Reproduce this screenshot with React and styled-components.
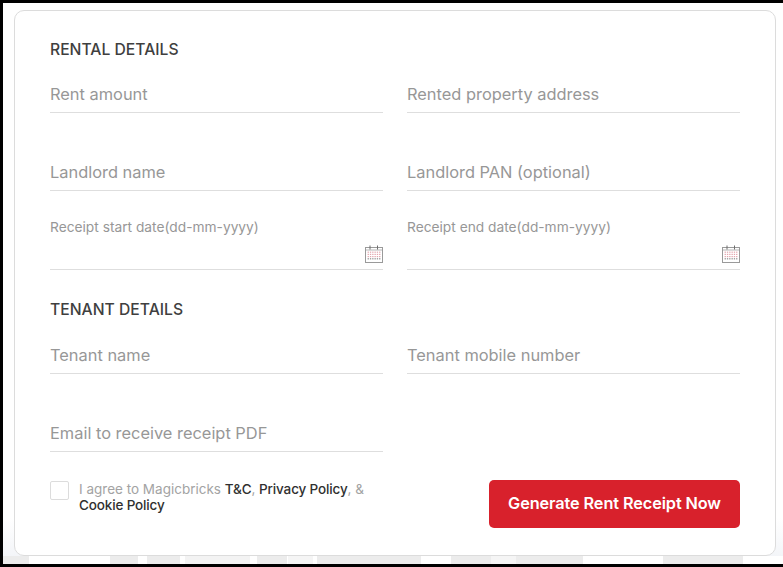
import React from "react";
import styled, { createGlobalStyle } from "styled-components";

const GlobalStyle = createGlobalStyle`
  html, body {
    margin: 0;
    padding: 0;
    background: #fff;
  }
  * { box-sizing: border-box; }
`;

const Frame = styled.div`
  width: 783px;
  height: 567px;
  padding: 3px 0 3px 3px;
  background: #000;
  overflow: hidden;
`;

const Backdrop = styled.div`
  display: flex;
  flex-direction: column;
  height: 100%;
  padding-top: 7px;
  background: linear-gradient(to bottom, #fff 0, #fff 515px, #f1f3f7 100%);
`;

const CardWrap = styled.div`
  flex: 1;
  min-height: 0;
  padding: 0 7px 0 11px;
`;

const Card = styled.form`
  height: 100%;
  padding: 29px 35px 0 35px;
  background: #fff;
  border: 1px solid #dcdcdc;
  border-radius: 10px;
  font-family: Inter, "Liberation Sans", sans-serif;
`;

// blurred bits of the page behind the dialog
const PageStrip = styled.div`
  flex: none;
  display: flex;
  height: 8px;
  background: #fff;
`;

const PageBlur = styled.span`
  flex: none;
  width: ${(p) => p.$width}px;
  margin-left: ${(p) => p.$gap}px;
  background: ${(p) => p.$tone || "#ececec"};
`;

const Heading = styled.h2`
  margin: 0;
  height: 20px;
  font-size: 15.7px;
  line-height: 20px;
  font-weight: 500;
  color: #3f3f3f;
`;

const Grid = styled.div`
  display: grid;
  grid-template-columns: 333px 333px;
  column-gap: 24px;
  margin-top: 10px;
`;

const Field = styled.label`
  display: flex;
  position: relative;
  height: 78px;
  padding-top: 49px;
  border-bottom: 1px solid #dedede;
  font-size: 16.4px;
  line-height: 20px;
  color: #979797;
  align-items: flex-start;
`;

const FirstField = styled(Field)`
  height: ${(p) => p.$height}px;
  padding-top: ${(p) => p.$height - 29}px;
`;

const DateField = styled(Field)`
  height: 79px;
  padding-top: 26px;
  font-size: 13.75px;
`;

const CalendarSlot = styled.span`
  position: absolute;
  right: 0;
  bottom: 6px;
  display: flex;
`;

const TenantHeading = styled(Heading)`
  margin-top: 30px;
`;

const AgreeRow = styled.div`
  display: flex;
  justify-content: space-between;
  align-items: flex-start;
  margin-top: 28px;
`;

const Agree = styled.div`
  display: flex;
  gap: 10px;
  padding-top: 1px;
`;

const Checkbox = styled.span`
  flex: none;
  width: 19px;
  height: 19px;
  border: 1px solid #dcdcdc;
  border-radius: 2px;
  background: #fff;
`;

const AgreeText = styled.p`
  margin: 0;
  width: 300px;
  font-size: 13.5px;
  line-height: 16px;
  color: #a3a3a3;
`;

const Strong = styled.span`
  font-weight: 500;
  letter-spacing: -0.15px;
  color: #303030;
`;

const Submit = styled.button`
  width: 251px;
  height: 48px;
  padding: 0 0 2px;
  border: 0;
  border-radius: 5px;
  background: #d8212c;
  color: #fff;
  font-family: inherit;
  font-size: 16.3px;
  font-weight: 600;
  letter-spacing: -0.1px;
`;

const blurs = [
  { gap: 0, width: 26 },
  { gap: 81, width: 28 },
  { gap: 9, width: 33 },
  { gap: 5, width: 65, tone: "#f3f3f3" },
  { gap: 7, width: 30 },
  { gap: 1, width: 25, tone: "#f5f5f5" },
  { gap: 4, width: 104 },
  { gap: 30, width: 40 },
  { gap: 0, width: 25, tone: "#f5f5f5" },
  { gap: 0, width: 67 },
  { gap: 80, width: 80 },
];

function CalendarIcon() {
  const dots = [];
  for (let row = 0; row < 4; row++) {
    for (let col = 0; col < 6; col++) {
      dots.push(
        <rect
          key={`${row}-${col}`}
          x={2.6 + col * 2.3}
          y={6.6 + row * 2.2}
          width="1.3"
          height="1.2"
          fill={row === 3 ? "#8d8d8d" : "#e3a5ad"}
        />
      );
    }
  }
  return (
    <svg width="18" height="18" viewBox="0 0 18 18" aria-hidden="true">
      <rect x="0.5" y="2.5" width="17" height="15" fill="#fff" stroke="#9a9a9a" />
      <path d="M1 5h16" stroke="#b5b5b5" />
      <path d="M5 0.5v4M12.5 0.5v4" stroke="#6f6f6f" />
      {dots}
    </svg>
  );
}

function App() {
  return (
    <Frame>
      <GlobalStyle />
      <Backdrop>
        <CardWrap>
          <Card>
            <Heading>RENTAL DETAILS</Heading>
            <Grid>
              <FirstField $height={43}>Rent amount</FirstField>
              <FirstField $height={43}>Rented property address</FirstField>
              <Field>Landlord name</Field>
              <Field>Landlord PAN (optional)</Field>
              <DateField>
                Receipt start date(dd-mm-yyyy)
                <CalendarSlot><CalendarIcon /></CalendarSlot>
              </DateField>
              <DateField>
                Receipt end date(dd-mm-yyyy)
                <CalendarSlot><CalendarIcon /></CalendarSlot>
              </DateField>
            </Grid>
            <TenantHeading>TENANT DETAILS</TenantHeading>
            <Grid>
              <FirstField $height={44}>Tenant name</FirstField>
              <FirstField $height={44}>Tenant mobile number</FirstField>
              <Field>Email to receive receipt PDF</Field>
            </Grid>
            <AgreeRow>
              <Agree>
                <Checkbox />
                <AgreeText>
                  I agree to Magicbricks <Strong>T&amp;C</Strong>, <Strong>Privacy Policy</Strong>, &amp; <Strong>Cookie Policy</Strong>
                </AgreeText>
              </Agree>
              <Submit type="button">Generate Rent Receipt Now</Submit>
            </AgreeRow>
          </Card>
        </CardWrap>
        <PageStrip>
          {blurs.map((b, i) => (
            <PageBlur key={i} $gap={b.gap} $width={b.width} $tone={b.tone} />
          ))}
        </PageStrip>
      </Backdrop>
    </Frame>
  );
}

export default App;
